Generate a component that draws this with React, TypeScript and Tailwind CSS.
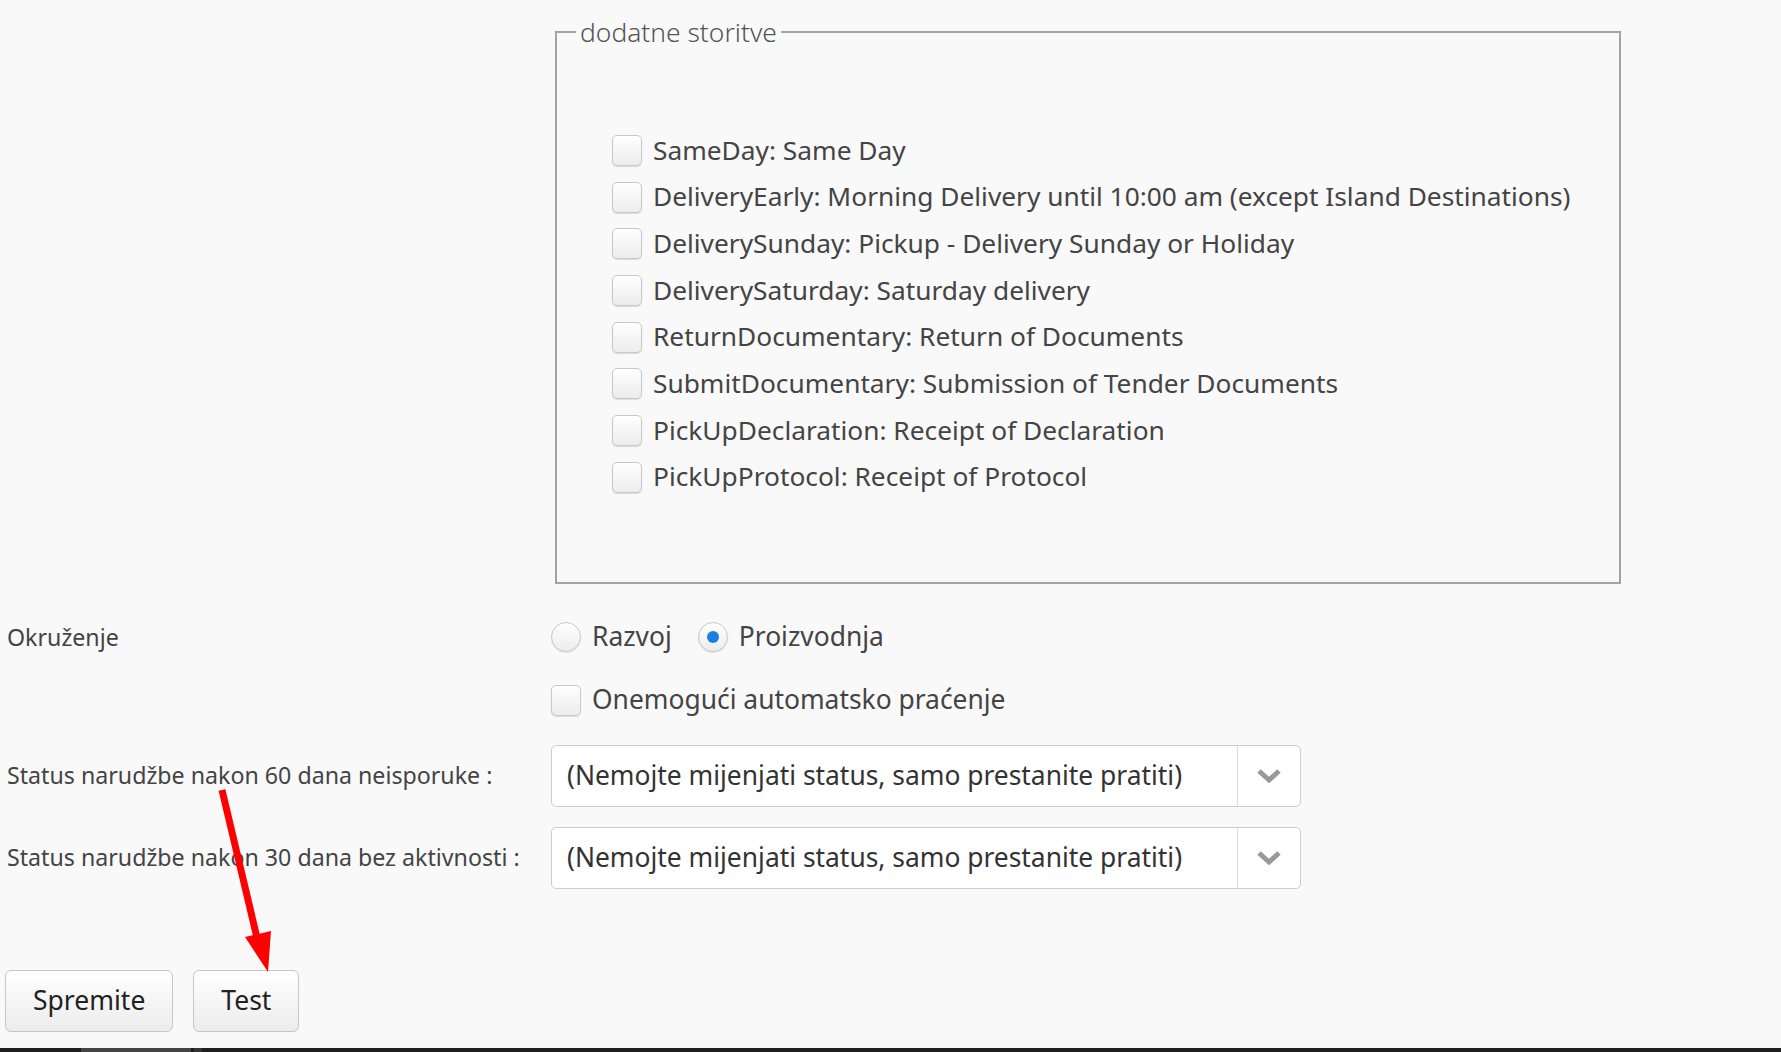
import React from "react";

const services = [
  "SameDay: Same Day",
  "DeliveryEarly: Morning Delivery until 10:00 am (except Island Destinations)",
  "DeliverySunday: Pickup - Delivery Sunday or Holiday",
  "DeliverySaturday: Saturday delivery",
  "ReturnDocumentary: Return of Documents",
  "SubmitDocumentary: Submission of Tender Documents",
  "PickUpDeclaration: Receipt of Declaration",
  "PickUpProtocol: Receipt of Protocol",
];

const statusOption = "(Nemojte mijenjati status, samo prestanite pratiti)";

function Box() {
  return (
    <span className="inline-block w-[30px] h-[31px] shrink-0 rounded-[5px] border border-[#c8c8c8] bg-gradient-to-b from-white to-[#ececec] shadow-[0_1px_1px_rgba(0,0,0,0.12)]" />
  );
}

function Radio({ checked }: { checked?: boolean }) {
  return (
    <span className="w-[30px] h-[30px] shrink-0 rounded-full border border-[#c8c8c8] bg-gradient-to-b from-white to-[#ececec] shadow-[0_1px_1px_rgba(0,0,0,0.12)] flex items-center justify-center">
      {checked && <span className="w-[12px] h-[12px] rounded-full bg-[#1a7fe3]" />}
    </span>
  );
}

function Select() {
  return (
    <div className="w-[750px] h-[62px] flex bg-white border border-[#cdcdcd] rounded-[5px]">
      <div className="flex-1 flex items-center pl-[15px] text-[26.4px] text-[#333]">{statusOption}</div>
      <div className="w-[63px] border-l border-[#dedede] flex items-center justify-center">
        <svg width="26" height="16" viewBox="0 0 26 16">
          <polyline points="3,3 13,12 23,3" fill="none" stroke="#999" strokeWidth="5" />
        </svg>
      </div>
    </div>
  );
}

export default function App() {
  return (
    <div className="relative min-h-screen flex flex-col bg-[#f9f9f9] text-[#444] font-['Noto_Sans','Open_Sans',sans-serif]">
      <div className="pl-[7px]">
        <div className="grid grid-cols-[544px_1fr]">
          <div />
          <fieldset className="ml-[4px] mt-[16px] w-[1066px] border-2 border-[#a3a3a3] px-[19px] pb-[81px]">
            <legend className="px-[4px] text-[26.4px] leading-[32px] font-light text-[#555]">dodatne storitve</legend>
            <div className="pl-[36px] pt-[79px]">
              {services.map((s) => (
                <label key={s} className="h-[46.7px] flex items-center gap-[11px] text-[26.3px]">
                  <Box />
                  <span>{s}</span>
                </label>
              ))}
            </div>
          </fieldset>

          <div className="mt-[30px] h-[47px] flex items-center text-[23.2px]">Okruženje</div>
          <div className="mt-[30px] h-[47px] flex items-center gap-[11px] text-[26.4px]">
            <Radio />
            <span className="mr-[15px]">Razvoj</span>
            <Radio checked />
            <span>Proizvodnja</span>
          </div>

          <div />
          <div className="mt-[16px] h-[47px] flex items-center gap-[11px] text-[26.4px]">
            <Box />
            <span>Onemogući automatsko praćenje</span>
          </div>

          <div className="mt-[21px] flex items-center text-[23.2px]">Status narudžbe nakon 60 dana neisporuke :</div>
          <div className="mt-[21px]">
            <Select />
          </div>

          <div className="mt-[20px] flex items-center text-[23.2px]">Status narudžbe nakon 30 dana bez aktivnosti :</div>
          <div className="mt-[20px]">
            <Select />
          </div>
        </div>

        <div className="mt-[81px] flex gap-[20px] -ml-[2px]">
          <button className="h-[62px] px-[27px] rounded-[6px] border border-[#c6c6c6] bg-gradient-to-b from-white to-[#ececec] text-[26.5px] text-[#222]">
            Spremite
          </button>
          <button className="h-[62px] px-[27px] rounded-[6px] border border-[#c6c6c6] bg-gradient-to-b from-white to-[#ececec] text-[26.5px] text-[#222]">
            Test
          </button>
        </div>
      </div>

      <div className="mt-auto h-[4px] bg-[#1f1f1f] flex">
        <div className="ml-[81px] w-[110px] bg-[#444]" />
        <div className="ml-[3px] w-[8px] bg-[#333]" />
      </div>

      <svg className="absolute left-0 top-0 pointer-events-none" width="320" height="1052">
        <line x1="222" y1="790" x2="258" y2="942" stroke="#ff0000" strokeWidth="7" />
        <polygon points="268,972 245,937 271,931" fill="#ff0000" />
      </svg>
    </div>
  );
}
